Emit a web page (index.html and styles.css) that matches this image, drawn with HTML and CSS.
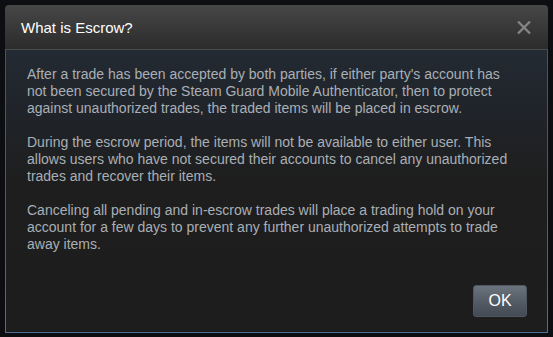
FILE: index.html
```html
<!DOCTYPE html>
<html>
<head>
<meta charset="utf-8">
<link rel="stylesheet" href="styles.css">
</head>
<body>
<div class="modal">
  <div class="modal-header">
    <div class="modal-title">What is Escrow?</div>
    <div class="modal-close">
      <svg width="14" height="13" viewBox="0 0 14 13"><path d="M1 0.5 L13 12.5 M13 0.5 L1 12.5" stroke="#858585" stroke-width="2.3" fill="none"/></svg>
    </div>
  </div>
  <div class="modal-body">
    <div class="modal-text">
      <p>After a trade has been accepted by both parties, if either party's account has not been secured by the Steam Guard Mobile Authenticator, then to protect against unauthorized trades, the traded items will be placed in escrow.</p>
      <p>During the escrow period, the items will not be available to either user. This allows users who have not secured their accounts to cancel any unauthorized trades and recover their items.</p>
      <p>Canceling all pending and in-escrow trades will place a trading hold on your account for a few days to prevent any further unauthorized attempts to trade away items.</p>
    </div>
    <div class="modal-buttons">
      <button class="btn">OK</button>
    </div>
  </div>
</div>
</body>
</html>
```
FILE: styles.css
```css
html, body {
  margin: 0;
  padding: 0;
  background: #0c0e11;
  width: 553px;
  height: 337px;
  overflow: hidden;
}
.modal {
  margin: 5px 0 0 5px;
  width: 543px;
  height: 328px;
  display: flex;
  flex-direction: column;
  font-family: "Liberation Sans", Arial, sans-serif;
}
.modal-header {
  height: 45px;
  box-sizing: border-box;
  border-radius: 4px 4px 0 0;
  background: linear-gradient(to bottom, #474747 0%, #2b2b2b 100%);
  border-bottom: 1px solid #4a4c4f;
  display: flex;
  align-items: center;
  justify-content: space-between;
  padding: 0 17px 0 16px;
}
.modal-title {
  color: #ffffff;
  font-size: 15px;
  margin-top: 1px;
}
.modal-close {
  display: flex;
  margin-top: 1px;
}
.modal-body {
  flex: 1;
  box-sizing: border-box;
  border: 1px solid;
  border-top: none;
  border-image: linear-gradient(to bottom, #4f5359 0%, #4b5a6a 50%, #4e6f93 100%) 1;
  background: linear-gradient(to bottom, #232a33 0%, #20242a 60px, #1e1e1e 130px, #1d1d1d 100%);
  display: flex;
  flex-direction: column;
  padding: 16px 20px 15px 21px;
}
.modal-text {
  flex: 1;
  color: #a9afb5;
  font-size: 14px;
  line-height: 17px;
  padding-right: 8px;
}
.modal-text p {
  margin: 0 0 17px 0;
}
.modal-buttons {
  display: flex;
  justify-content: flex-end;
}
.btn {
  width: 54px;
  height: 32px;
  border: 1px solid #4f5761;
  border-radius: 3px;
  background: linear-gradient(to bottom, #6b737c 0%, #545c66 50%, #434a53 100%);
  color: #ffffff;
  font-family: "Liberation Sans", Arial, sans-serif;
  font-size: 16px;
  padding: 0;
}
```
